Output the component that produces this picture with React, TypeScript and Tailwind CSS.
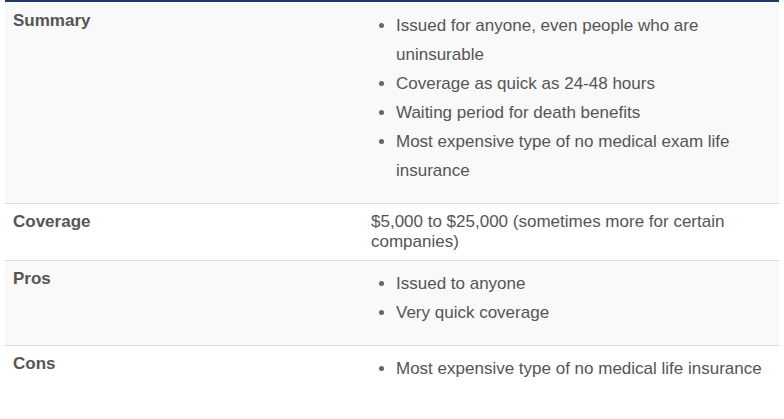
import React from "react";

export default function App() {
  const ul = "list-disc pl-[25px] m-0 mb-[10px] leading-[29px] marker:text-[#666]";
  return (
    <div className="w-[784px] h-[419px] bg-white pt-0 px-[5px]" style={{ fontFamily: '"Liberation Sans", Arial, sans-serif' }}>
      <table className="w-[774px] border-collapse text-[17px] text-[#555] border-t-[2px] border-[#1f3a64] table-fixed">
        <colgroup>
          <col className="w-[358px]" />
          <col className="w-[416px]" />
        </colgroup>
        <tbody>
          <tr className="bg-[#f9f9f9] border-b border-[#dddddd] align-top">
            <td className="px-[8px] pt-[9px] pb-[8px] font-bold leading-[20px]">Summary</td>
            <td className="px-[8px] pt-[9px] pb-[8px] leading-[20px]">
              <ul className={ul}>
                <li>Issued for anyone, even people who are uninsurable</li>
                <li>Coverage as quick as 24-48 hours</li>
                <li>Waiting period for death benefits</li>
                <li>Most expensive type of no medical exam life insurance</li>
              </ul>
            </td>
          </tr>
          <tr className="bg-white border-b border-[#dddddd] align-top">
            <td className="p-[8px] font-bold leading-[20px]">Coverage</td>
            <td className="p-[8px] leading-[20px]">$5,000 to $25,000 (sometimes more for certain companies)</td>
          </tr>
          <tr className="bg-[#f9f9f9] border-b border-[#dddddd] align-top">
            <td className="p-[8px] font-bold leading-[20px]">Pros</td>
            <td className="p-[8px] leading-[20px]">
              <ul className={ul}>
                <li>Issued to anyone</li>
                <li>Very quick coverage</li>
              </ul>
            </td>
          </tr>
          <tr className="bg-white align-top">
            <td className="p-[8px] font-bold leading-[20px]">Cons</td>
            <td className="p-[8px] leading-[20px]">
              <ul className={ul}>
                <li>Most expensive type of no medical life insurance</li>
              </ul>
            </td>
          </tr>
        </tbody>
      </table>
    </div>
  );
}
